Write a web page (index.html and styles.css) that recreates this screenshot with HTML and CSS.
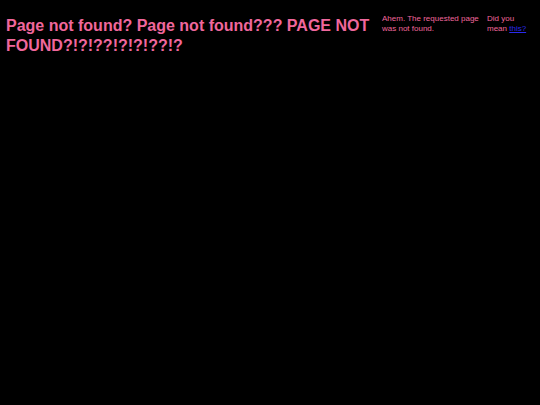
FILE: index.html
```html
<!DOCTYPE html>
<html>
<head>
<meta charset="utf-8">
<link rel="stylesheet" href="styles.css">
</head>
<body>
<div class="page">
  <h1 class="title">Page not found? Page not found??? PAGE NOT FOUND?!?!??!?!?!??!?</h1>
  <p class="note">Ahem. The requested page was not found.</p>
  <p class="note hint">Did you mean <a href="#" class="link">this?</a></p>
</div>
</body>
</html>
```
FILE: styles.css
```css
html, body {
  margin: 0;
  padding: 0;
  background: #000;
}
.page {
  display: flex;
  align-items: flex-start;
  padding: 14px 6px 0 6px;
  font-family: "Liberation Sans", Arial, sans-serif;
  color: #f0679c;
}
.title {
  margin: 2px 0 0 0;
  width: 370px;
  flex: none;
  font-size: 16px;
  line-height: 20px;
  font-weight: bold;
}
.note {
  margin: 0 0 0 6px;
  width: 99px;
  flex: none;
  font-size: 8px;
  line-height: 10px;
}
.hint {
  width: 45px;
}
.link {
  color: #2a2aee;
}
```
